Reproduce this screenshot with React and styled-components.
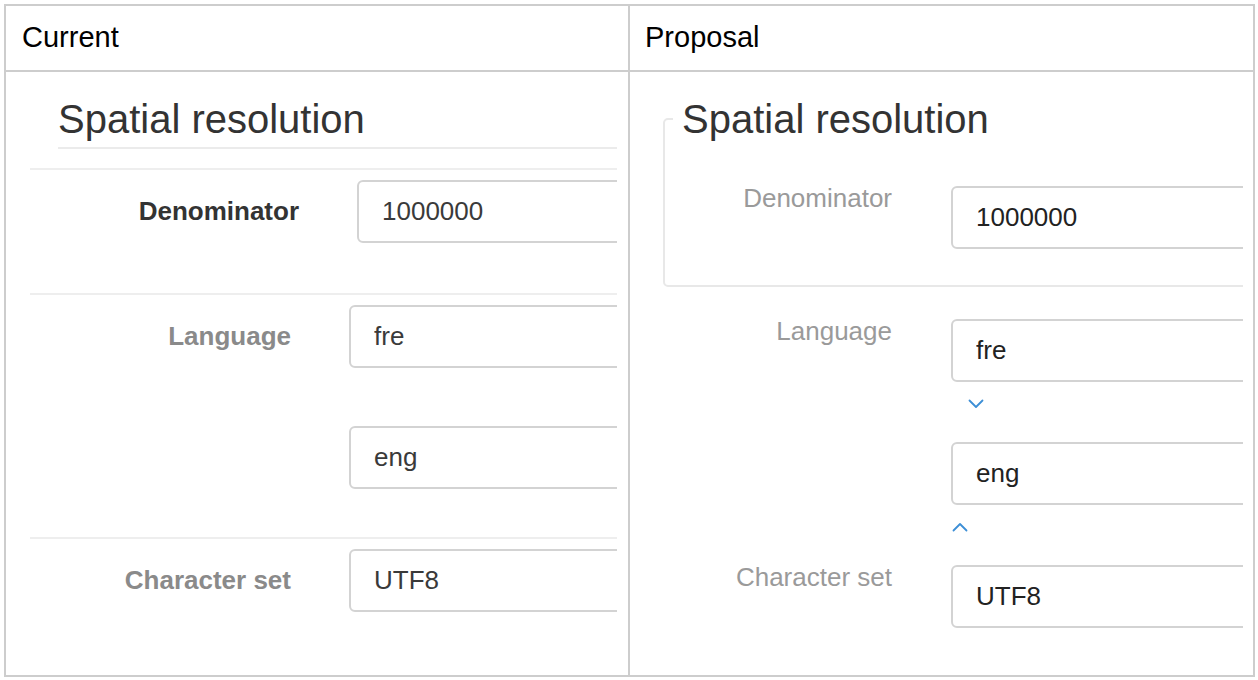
import styled, { createGlobalStyle } from "styled-components";

const GlobalStyle = createGlobalStyle`
  html, body {
    margin: 0;
    background: #fff;
  }

  body {
    padding: 4px;
    font-family: "Liberation Sans", Arial, Helvetica, sans-serif;
  }
`;

const Chevron = ({ up }) => (
  <svg width="16" height="10" viewBox="0 0 16 10" aria-hidden="true">
    <polyline
      points={up ? "1.5,8.5 8,2 14.5,8.5" : "1.5,1.5 8,8 14.5,1.5"}
      fill="none"
      stroke="#3d8fd6"
      strokeWidth="1.8"
      strokeLinecap="round"
      strokeLinejoin="round"
    />
  </svg>
);

const CurrentForm = () => (
  <Frame>
    <CurrentTitle>Spatial resolution</CurrentTitle>

    <CurrentRow $labelWidth={269} $padBottom={50}>
      <CurrentLabel $strong>Denominator</CurrentLabel>
      <ValueStack>
        <TextBox readOnly value="1000000" $tone="#3a3a3a" />
      </ValueStack>
    </CurrentRow>

    <CurrentRow $labelWidth={261} $padBottom={48}>
      <CurrentLabel>Language</CurrentLabel>
      <ValueStack $gap={58}>
        <TextBox readOnly value="fre" $tone="#3a3a3a" />
        <TextBox readOnly value="eng" $tone="#3a3a3a" />
      </ValueStack>
    </CurrentRow>

    <CurrentRow $labelWidth={261} $padBottom={0}>
      <CurrentLabel>Character set</CurrentLabel>
      <ValueStack>
        <TextBox readOnly value="UTF8" $tone="#3a3a3a" />
      </ValueStack>
    </CurrentRow>
  </Frame>
);

const ProposalForm = () => (
  <Frame>
    <Group>
      <Legend>Spatial resolution</Legend>
      <ProposalRow $labelWidth={219}>
        <ProposalLabel>Denominator</ProposalLabel>
        <ValueStack>
          <TextBox readOnly value="1000000" $tone="#222" />
        </ValueStack>
      </ProposalRow>
    </Group>

    <ProposalRow $labelWidth={252} $top={32}>
      <ProposalLabel>Language</ProposalLabel>
      <ValueStack>
        <TextBox readOnly value="fre" $tone="#222" />
        <MoveButton type="button" aria-label="Move down" $indent={17} $after={33}>
          <Chevron />
        </MoveButton>
        <TextBox readOnly value="eng" $tone="#222" />
        <MoveButton type="button" aria-label="Move up" $indent={1} $after={33}>
          <Chevron up />
        </MoveButton>
      </ValueStack>
    </ProposalRow>

    <ProposalRow $labelWidth={252}>
      <ProposalLabel>Character set</ProposalLabel>
      <ValueStack>
        <TextBox readOnly value="UTF8" $tone="#222" />
      </ValueStack>
    </ProposalRow>
  </Frame>
);

const App = () => (
  <>
    <GlobalStyle />
    <Table>
      <HeadCell>Current</HeadCell>
      <HeadCell $divider>Proposal</HeadCell>
      <BodyCell $padLeft={24} $padRight={11}>
        <CurrentForm />
      </BodyCell>
      <BodyCell $divider $padLeft={10} $padRight={10}>
        <ProposalForm />
      </BodyCell>
    </Table>
  </>
);

export default App;

const Table = styled.div`
  border: 2px solid #cdcdcd;
  display: grid;
  grid-template-columns: 622px 625px;
  grid-template-rows: 66px 603px;
  width: 1251px;
  box-sizing: border-box;
`;

const HeadCell = styled.div`
  align-items: center;
  border-bottom: 2px solid #cdcdcd;
  border-left: ${({ $divider }) => ($divider ? "2px solid #cdcdcd" : "none")};
  color: #000;
  display: flex;
  font-size: 29px;
  padding-left: ${({ $divider }) => ($divider ? "15px" : "16px")};
  padding-bottom: 2px;
`;

const BodyCell = styled.div`
  border-left: ${({ $divider }) => ($divider ? "2px solid #cdcdcd" : "none")};
  display: flex;
  min-width: 0;
  padding: 0 ${({ $padRight }) => $padRight}px 0 ${({ $padLeft }) => $padLeft}px;
`;

const Frame = styled.div`
  flex: 1;
  min-width: 0;
  overflow: hidden;
  padding-top: 25px;
`;

const CurrentTitle = styled.h2`
  border-bottom: 2px solid #ebebeb;
  color: #333;
  font-size: 40px;
  font-weight: normal;
  line-height: 44px;
  margin: 0 0 19px 28px;
  padding-bottom: 6px;
`;

const CurrentRow = styled.div`
  border-top: 2px solid #eeeeee;
  column-gap: 58px;
  display: grid;
  grid-template-columns: ${({ $labelWidth }) => $labelWidth}px 1fr;
  padding: 10px 0 ${({ $padBottom }) => $padBottom}px;
`;

const CurrentLabel = styled.label`
  align-items: center;
  color: ${({ $strong }) => ($strong ? "#333" : "#8a8a8a")};
  display: flex;
  font-size: 26px;
  font-weight: bold;
  height: 63px;
  justify-content: flex-end;
  white-space: nowrap;
`;

const ValueStack = styled.div`
  display: flex;
  flex-direction: column;
  gap: ${({ $gap }) => $gap || 0}px;
  min-width: 0;
`;

const TextBox = styled.input`
  background: #fff;
  border: 2px solid #d3d3d3;
  border-radius: 6px;
  box-sizing: border-box;
  color: ${({ $tone }) => $tone};
  font-family: inherit;
  font-size: 26px;
  height: 63px;
  outline: none;
  padding: 0 0 0 23px;
  width: 420px;
`;

const Group = styled.fieldset`
  border: 2px solid #e8e8e8;
  border-radius: 5px;
  box-sizing: border-box;
  margin: 0 0 0 23px;
  min-width: 0;
  padding: 45px 0 36px 8px;
  width: 720px;
`;

const Legend = styled.legend`
  box-sizing: border-box;
  color: #333;
  font-size: 40px;
  line-height: 44px;
  padding: 0 9px;
  width: 100%;
`;

const ProposalRow = styled.div`
  column-gap: 59px;
  display: grid;
  grid-template-columns: ${({ $labelWidth }) => $labelWidth}px 1fr;
  margin-top: ${({ $top }) => $top || 0}px;
`;

const ProposalLabel = styled.label`
  color: #9a9a9a;
  font-size: 26px;
  line-height: 30px;
  margin-top: -3px;
  text-align: right;
  white-space: nowrap;
`;

const MoveButton = styled.button`
  align-self: flex-start;
  background: none;
  border: none;
  cursor: pointer;
  display: flex;
  margin: 17px 0 ${({ $after }) => $after}px ${({ $indent }) => $indent}px;
  padding: 0;
`;
